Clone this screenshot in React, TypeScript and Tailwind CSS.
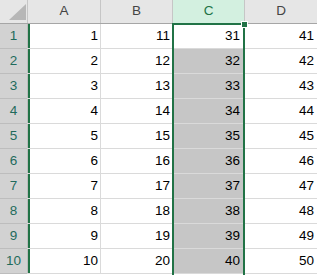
const rows = [1, 2, 3, 4, 5, 6, 7, 8, 9, 10];

export default function App() {
  return (
    <div
      className="relative w-[317px] h-[275px] overflow-hidden bg-white text-[13.5px] text-black"
      style={{ fontFamily: '"Liberation Sans", Arial, sans-serif' }}
    >
      {/* column headers */}
      <div className="flex h-[24px] bg-[#e6e6e6] border-b border-[#a6a6a6]">
        <div className="relative w-[28px] shrink-0 border-r border-[#c6c6c6]">
          <svg className="absolute right-[1px] bottom-[3px]" width="17" height="16" viewBox="0 0 17 16">
            <polygon points="17,0 17,16 0,16" fill="#b7b7b7" />
          </svg>
        </div>
        <div className="w-[73px] shrink-0 flex items-center justify-center border-r border-[#c6c6c6] text-[#444]">A</div>
        <div className="w-[72px] shrink-0 flex items-center justify-center border-r border-[#c6c6c6] text-[#444]">B</div>
        <div className="w-[72px] shrink-0 flex items-center justify-center border-r border-[#c6c6c6] bg-[#d3f0e0] text-[#217346]">C</div>
        <div className="flex-1 flex items-center justify-center text-[#444]">D</div>
      </div>

      {rows.map((r) => (
        <div key={r} className="flex h-[25px] border-b border-[#dadada]">
          <div className="w-[30px] shrink-0 flex">
            <div className="w-[27px] flex items-center justify-center bg-[#d2d2d2] text-[#1f6b5c] border-b border-[#bdbdbd] -mb-px">
              {r}
            </div>
            <div className="w-px bg-[#bdbdbd]" />
            <div className="w-[2px] bg-[#217346]" />
          </div>
          <div className="w-[71px] shrink-0 flex items-center justify-end pr-[2px] border-r border-[#dadada]">{r}</div>
          <div className="w-[72px] shrink-0 flex items-center justify-end pr-[2px] border-r border-[#dadada]">{r + 10}</div>
          <div
            className={`w-[72px] shrink-0 flex items-center justify-end pr-[4px] border-r border-[#dadada] ${
              r === 1 ? 'bg-white' : 'bg-[#c6c6c6]'
            }`}
          >
            {r + 30}
          </div>
          <div className="flex-1 flex items-center justify-end pr-[3px]">{r + 40}</div>
        </div>
      ))}

      {/* selection border */}
      <div className="absolute left-[172px] top-[23px] w-[73px] h-[260px] border-2 border-[#217346] pointer-events-none" />
      <div className="absolute left-[241px] top-[21px] w-[7px] h-[7px] bg-[#217346] border border-white" />
    </div>
  );
}
